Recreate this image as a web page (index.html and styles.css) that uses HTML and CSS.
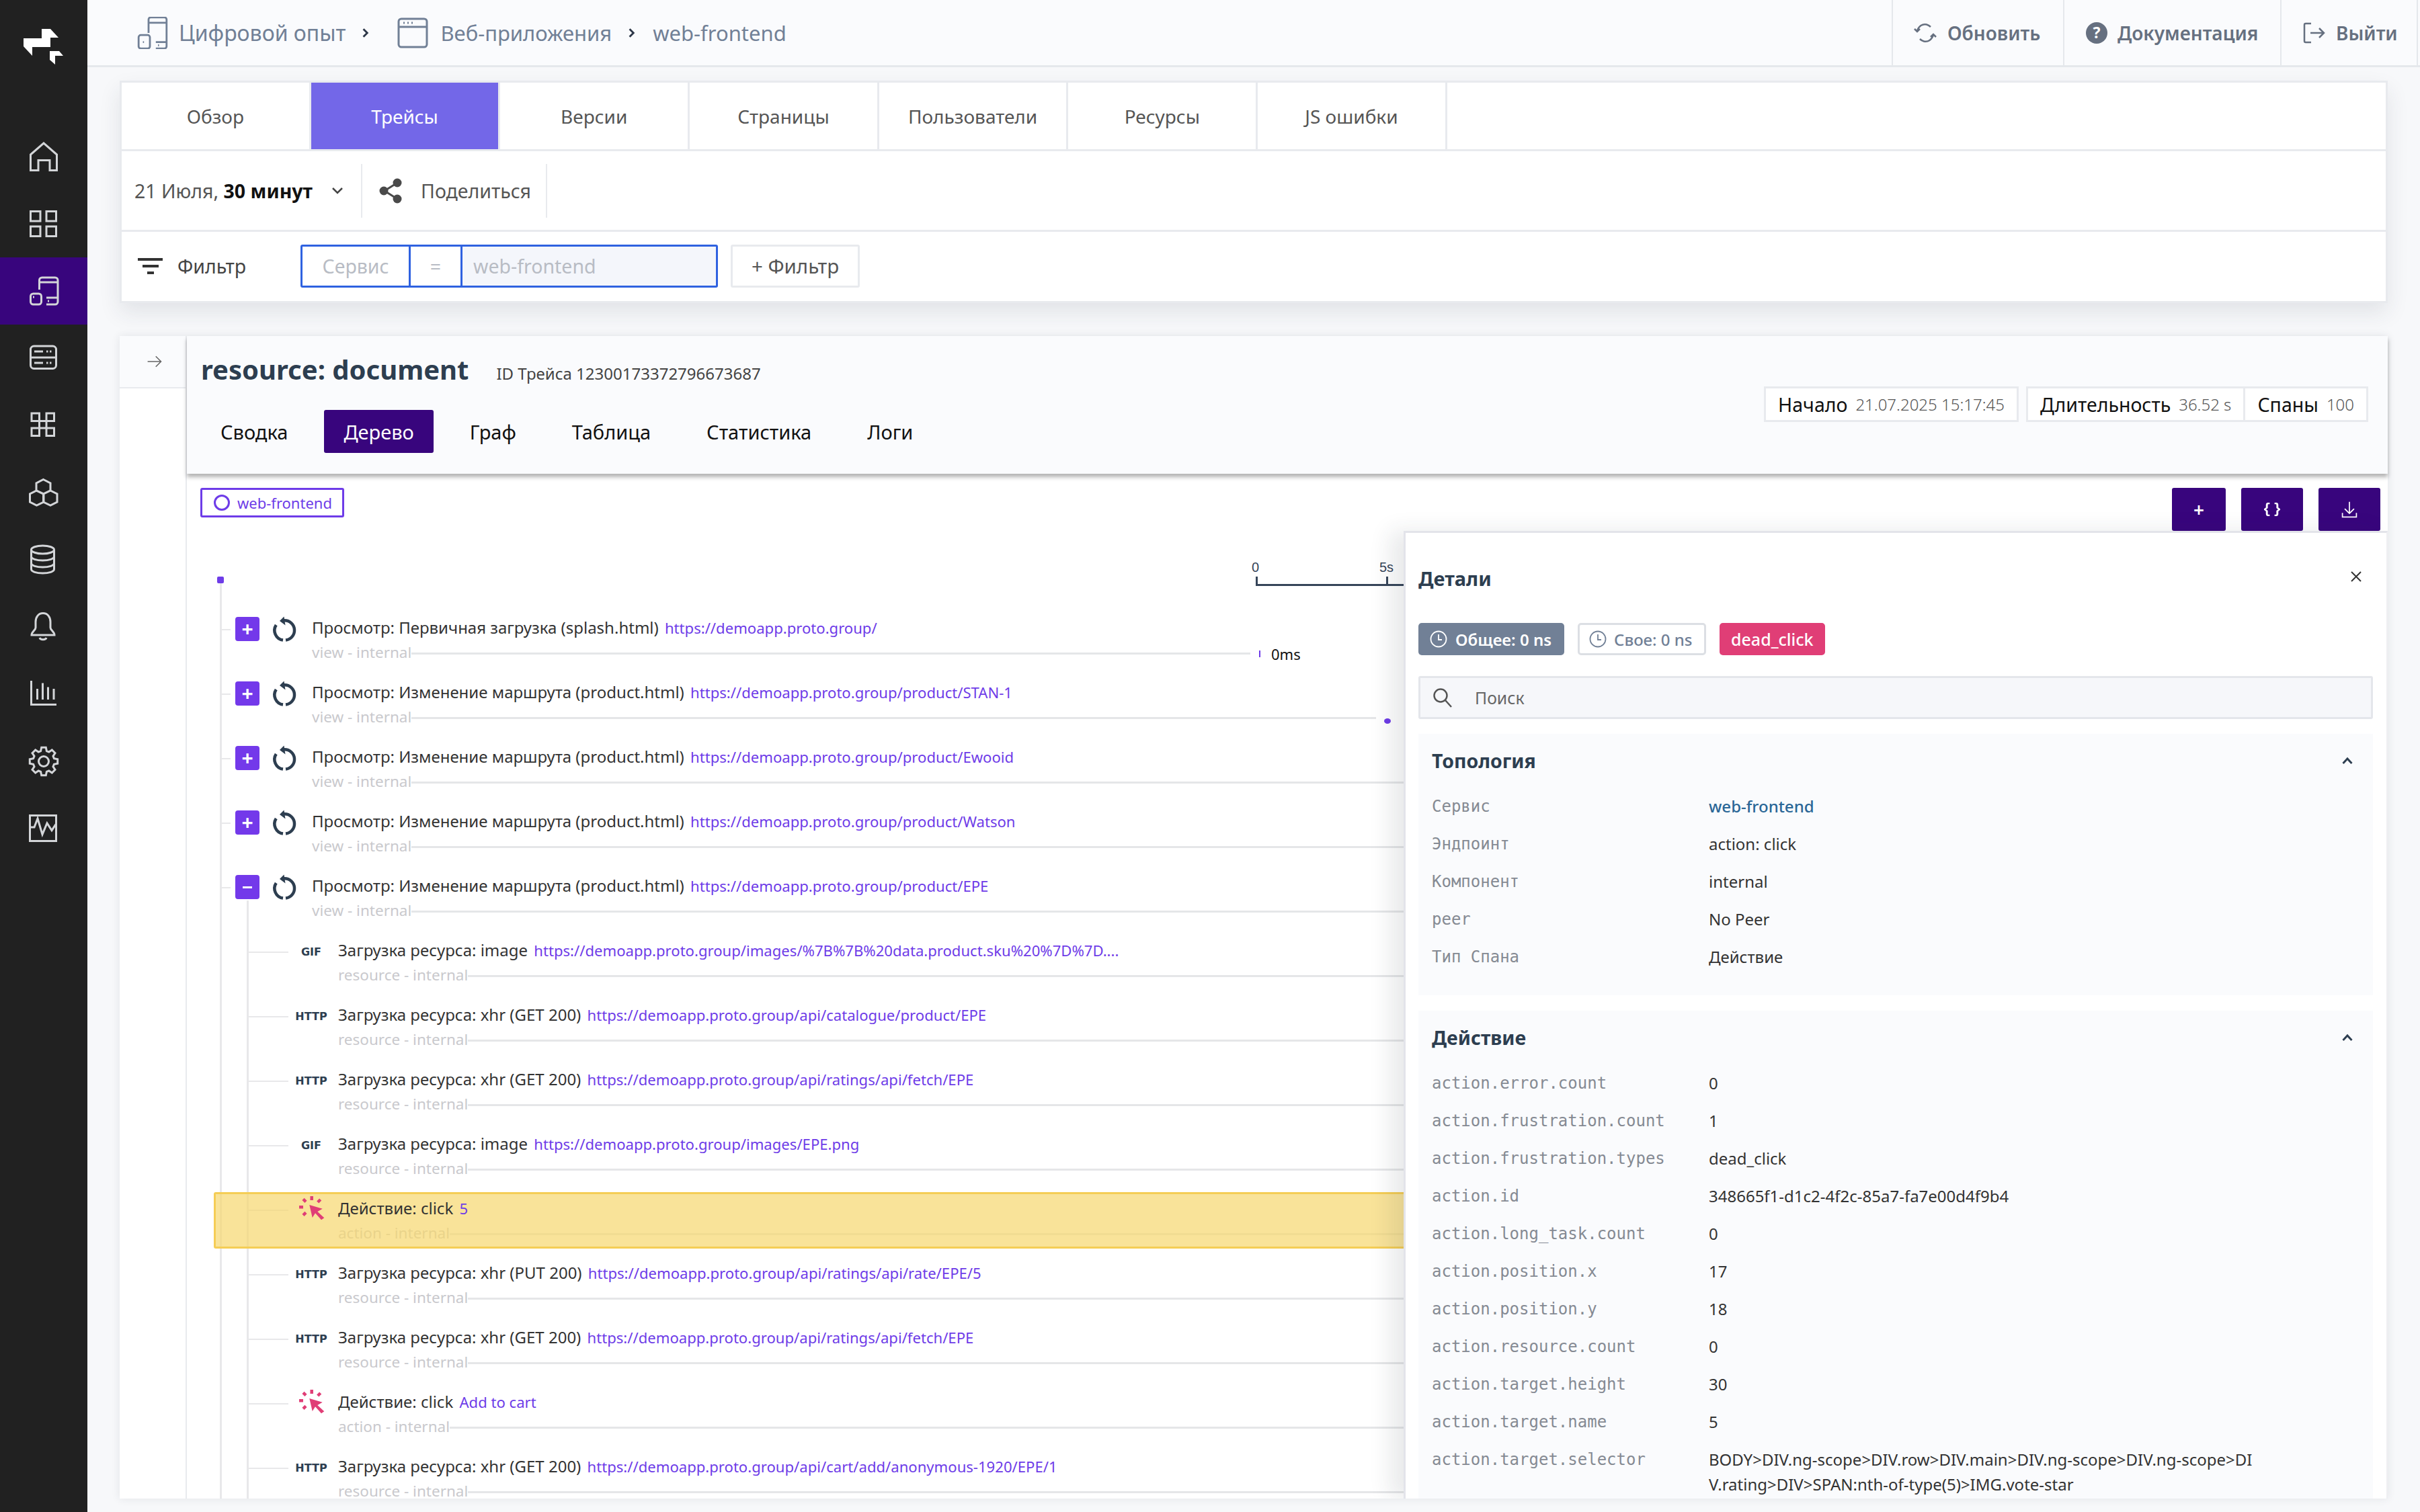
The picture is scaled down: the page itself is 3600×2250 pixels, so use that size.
FILE: index.html
```html
<!DOCTYPE html>
<html lang="ru">
<head>
  <meta charset="UTF-8">
  <meta name="viewport" content="width=device-width, initial-scale=1.0">
  <title>Трейсы</title>
  <link rel="stylesheet" href="styles.css">
</head>
<body>
  <aside class="sidebar">
    <svg class="logo" viewBox="0 0 130 183"><polygon points="35,57 62,57 62,43 75,43 87,56 75,56 75,70 48,70 48,83 35,69"/><polygon points="74,76 88,76 94,83 82,83 82,96 74,89"/></svg>
    <a class="side-item"><svg viewBox="0 0 60 60"><path d="M10.5 50.5V27L30 10l19.5 17v23.5H39V35.5H22v15z"/></svg></a>
    <a class="side-item"><svg viewBox="0 0 60 60"><rect x="10.5" y="11.5" width="14.5" height="14.5"/><rect x="34" y="11.5" width="14.5" height="14.5"/><rect x="10.5" y="34" width="14.5" height="14.5"/><rect x="34" y="34" width="14.5" height="14.5"/></svg></a>
    <a class="side-item active"><svg viewBox="0 0 60 60"><path d="M23.5 28V14a4 4 0 0 1 4-4H47a4 4 0 0 1 4 4v32a4 4 0 0 1-4 4H34M23.5 17H51M34 40h17M36 45h2M14 39h2"/><rect x="10.5" y="34" width="16" height="16" rx="4"/></svg></a>
    <a class="side-item"><svg viewBox="0 0 60 60"><rect x="10.5" y="12" width="38" height="33.5" rx="5"/><path d="M10.5 29h38M16 20h13M16 37h13M34 20h2.500M39 20h2.500M34 37h2.500M39 37h2.500"/></svg></a>
    <a class="side-item"><svg viewBox="0 0 60 60"><rect x="12" y="12" width="11.500" height="11.500"/><rect x="34" y="12" width="11.500" height="11.500"/><rect x="12" y="34" width="11.500" height="11.500"/><rect x="34" y="34" width="11.500" height="11.500"/><rect x="23.500" y="23.500" width="10.500" height="10.500"/></svg></a>
    <a class="side-item"><svg viewBox="0 0 60 60"><path d="M29.500 10.500L40 16v11l-10.500 5L19 27V16zM19.500 27L30 32v12l-10.500 5-10-5V32zM40 27l10 5v12l-10 5-10.500-5V32z"/></svg></a>
    <a class="side-item"><svg viewBox="0 0 60 60"><ellipse cx="28.500" cy="15" rx="17" ry="6"/><path d="M11.500 15v29c0 3.500 7.500 6 17 6s17-2.500 17-6V15M11.500 25c0 3.500 7.500 6 17 6s17-2.500 17-6M11.500 35c0 3.500 7.500 6 17 6s17-2.500 17-6"/></svg></a>
    <a class="side-item"><svg viewBox="0 0 60 60"><path d="M29 9.500c-7 0-11 6-11 13V31c0 4-6 6-6 11h34c0-5-6-7-6-11v-8.500c0-7-4-13-11-13zM24 46c1 3.500 9 3.500 10 0"/></svg></a>
    <a class="side-item"><svg viewBox="0 0 60 60"><path d="M11.500 10v35.500H49M20.500 22v16M28.500 13.500V38M36.500 19.500V38M45 22v16"/></svg></a>
    <a class="side-item"><svg viewBox="0 0 60 60"><g transform="translate(30 30)"><path d="M-4.400-15.400L-3.300-20.700H3.300L4.400-15.400 7.800-14 12.300-17 17-12.300 14-7.800 15.400-4.400 20.700-3.300V3.300L15.400 4.400 14 7.800 17 12.300 12.300 17 7.800 14 4.400 15.400 3.300 20.700H-3.300L-4.400 15.400-7.800 14-12.300 17-17 12.300-14 7.800-15.400 4.400-20.700 3.300V-3.300L-15.400-4.400-14-7.800-17-12.300-12.300-17-7.800-14z"/><circle r="7.500"/></g></svg></a>
    <a class="side-item"><svg viewBox="0 0 60 60"><rect x="9.500" y="10.500" width="39" height="38"/><path d="M9 28h7l5-13 7 23.700L35 22l7 10.700 6-9"/></svg></a>
  </aside>

  <div class="main">
    <header class="topbar">
      <nav class="crumbs">
        <svg class="crumb-icon" viewBox="0 0 60 60"><path d="M22.500 30V5a4 4 0 0 1 4-4H52a4 4 0 0 1 4 4v50a4 4 0 0 1-4 4H36M22.500 11H56M36 47h20M40 53h2M12 47h2"/><rect x="4" y="34" width="21" height="25" rx="4"/></svg>
        <span class="crumb-first">Цифровой опыт</span>
        <svg class="crumb-sep sep-first" viewBox="0 0 10 14"><path d="M2 2l5 5-5 5"/></svg>
        <svg class="crumb-icon crumb-window" viewBox="0 0 46 46"><rect x="2" y="2" width="42" height="42" rx="4"/><path d="M2 14h42M9 8h2M15 8h2M21 8h2"/></svg>
        <span>Веб-приложения</span>
        <svg class="crumb-sep" viewBox="0 0 10 14"><path d="M2 2l5 5-5 5"/></svg>
        <span>web-frontend</span>
      </nav>
      <div class="top-actions">
        <a class="top-btn btn-refresh"><svg viewBox="0 0 36 36"><path d="M6 15c2-7 8-11 14-9.500 2.500.6 4.500 2 6 3.500M30 21c-2 7-8 11-14 9.500-2.500-.6-4.500-2-6-3.500M2 12l4 4 4-4M26 24l4-4 4 4"/></svg>Обновить</a>
        <a class="top-btn btn-docs"><span class="help-icon">?</span>Документация</a>
        <a class="top-btn btn-exit"><svg viewBox="0 0 36 36"><path d="M14 4H6a2 2 0 0 0-2 2v24a2 2 0 0 0 2 2h8M13 18h20M26 11l7 7-7 7"/></svg>Выйти</a>
      </div>
    </header>

    <div class="content">
      <section class="card">
        <div class="tabs">
          <a class="tab">Обзор</a>
          <a class="tab active">Трейсы</a>
          <a class="tab">Версии</a>
          <a class="tab">Страницы</a>
          <a class="tab">Пользователи</a>
          <a class="tab">Ресурсы</a>
          <a class="tab">JS ошибки</a>
        </div>
        <div class="time-row">
          <div class="time-pick">
            <span>21 Июля, <b>30 минут</b></span>
            <svg viewBox="0 0 20 14"><path d="M3 3l7 7 7-7"/></svg>
          </div>
          <a class="share">
            <svg viewBox="0 0 36 38"><path class="share-lines" d="M27 7L8 19l19 12"/><circle cx="27" cy="7" r="6.500"/><circle cx="7" cy="19" r="6.500"/><circle cx="27" cy="31" r="6.500"/></svg>
            Поделиться
          </a>
        </div>
        <div class="filter-row">
          <div class="filter-title">
            <span class="filter-icon"><i></i><i></i><i></i></span>
            Фильтр
          </div>
          <div class="filter-group">
            <span class="f-key">Сервис</span>
            <span class="f-op">=</span>
            <span class="f-val">web-frontend</span>
          </div>
          <a class="add-filter">+ Фильтр</a>
        </div>
      </section>

      <section class="trace">
        <div class="trace-side">
          <a class="collapse"><svg viewBox="0 0 30 30"><path d="M3 15h23M17 6l9 9-9 9"/></svg></a>
        </div>
        <div class="trace-main">
          <div class="trace-head">
            <div>
              <div class="trace-title">
                <h1>resource: document</h1>
                <span class="trace-id">ID Трейса 12300173372796673687</span>
              </div>
              <div class="view-tabs">
                <a class="view-tab">Сводка</a>
                <a class="view-tab active">Дерево</a>
                <a class="view-tab">Граф</a>
                <a class="view-tab">Таблица</a>
                <a class="view-tab">Статистика</a>
                <a class="view-tab">Логи</a>
              </div>
            </div>
            <div class="stats">
              <div class="stat">Начало <small>21.07.2025 15:17:45</small></div>
              <div class="stat-pair">
                <div class="stat">Длительность <small>36.52 s</small></div>
                <div class="stat">Спаны <small>100</small></div>
              </div>
            </div>
          </div>

          <div class="trace-body">
            <div class="toolbar">
              <span class="service-chip"><i></i>web-frontend</span>
              <div class="tool-btns">
                <a class="tool-btn tool-plus">+</a>
                <a class="tool-btn tool-code"><svg viewBox="2 2 20 20" preserveAspectRatio="none"><path d="M9 3H7.500C6 3 5.500 4 5.500 5v4.500L3 12l2.500 2.500V19c0 1 .5 2 2 2H9M15 3h1.500c1.500 0 2 1 2 2v4.500L21 12l-2.500 2.500V19c0 1-.5 2-2 2H15"/></svg></a>
                <a class="tool-btn tool-down"><svg viewBox="0 0 30 30"><path d="M15 2v19M7 14l8 8 8-8M3 21v7h24v-7"/></svg></a>
              </div>
            </div>

            <div class="tree-head">
              <span class="root-dot"></span>
              <div class="axis">
                <span class="axis-label label-start">0</span>
                <span class="axis-label label-five">5s</span>
              </div>
            </div>

            <div class="tree">
              <div class="row">
                <span class="tick"></span><a class="toggle">+</a>
                <svg class="view-icon" viewBox="0 0 40 40"><path d="M20 7.300A14.700 14.700 0 0 1 22 36.600M18 36.600A14.700 14.700 0 0 1 7.800 14"/><polygon points="13,8 19.500,1.500 21.500,14.500"/></svg>
                <div class="row-body">
                  <div class="row-title">Просмотр: Первичная загрузка (splash.html) <a>https://demoapp.proto.group/</a></div>
                  <div class="row-sub"><span>view - internal</span><i class="rule"></i>
                    <span class="mark mark-zero"><i class="mark-bar"></i>0ms</span></div>
                </div>
              </div>
              <div class="row">
                <span class="tick"></span><a class="toggle">+</a>
                <svg class="view-icon" viewBox="0 0 40 40"><path d="M20 7.300A14.700 14.700 0 0 1 22 36.600M18 36.600A14.700 14.700 0 0 1 7.800 14"/><polygon points="13,8 19.500,1.500 21.500,14.500"/></svg>
                <div class="row-body">
                  <div class="row-title">Просмотр: Изменение маршрута (product.html) <a>https://demoapp.proto.group/product/STAN-1</a></div>
                  <div class="row-sub"><span>view - internal</span><i class="rule"></i>
                    <span class="mark mark-dot"><i class="mark-point"></i></span></div>
                </div>
              </div>
              <div class="row">
                <span class="tick"></span><a class="toggle">+</a>
                <svg class="view-icon" viewBox="0 0 40 40"><path d="M20 7.300A14.700 14.700 0 0 1 22 36.600M18 36.600A14.700 14.700 0 0 1 7.800 14"/><polygon points="13,8 19.500,1.500 21.500,14.500"/></svg>
                <div class="row-body">
                  <div class="row-title">Просмотр: Изменение маршрута (product.html) <a>https://demoapp.proto.group/product/Ewooid</a></div>
                  <div class="row-sub"><span>view - internal</span><i class="rule"></i></div>
                </div>
              </div>
              <div class="row">
                <span class="tick"></span><a class="toggle">+</a>
                <svg class="view-icon" viewBox="0 0 40 40"><path d="M20 7.300A14.700 14.700 0 0 1 22 36.600M18 36.600A14.700 14.700 0 0 1 7.800 14"/><polygon points="13,8 19.500,1.500 21.500,14.500"/></svg>
                <div class="row-body">
                  <div class="row-title">Просмотр: Изменение маршрута (product.html) <a>https://demoapp.proto.group/product/Watson</a></div>
                  <div class="row-sub"><span>view - internal</span><i class="rule"></i></div>
                </div>
              </div>
              <div class="row">
                <span class="tick"></span><a class="toggle toggle-minus"></a>
                <svg class="view-icon" viewBox="0 0 40 40"><path d="M20 7.300A14.700 14.700 0 0 1 22 36.600M18 36.600A14.700 14.700 0 0 1 7.800 14"/><polygon points="13,8 19.500,1.500 21.500,14.500"/></svg>
                <div class="row-body">
                  <div class="row-title">Просмотр: Изменение маршрута (product.html) <a>https://demoapp.proto.group/product/EPE</a></div>
                  <div class="row-sub"><span>view - internal</span><i class="rule"></i></div>
                </div>
              </div>

              <div class="children">
                <div class="row child">
                  <span class="tick"></span><span class="kind">GIF</span>
                  <div class="row-body">
                    <div class="row-title">Загрузка ресурса: image <a>https://demoapp.proto.group/images/%7B%7B%20data.product.sku%20%7D%7D....</a></div>
                    <div class="row-sub"><span>resource - internal</span><i class="rule"></i></div>
                  </div>
                </div>
                <div class="row child">
                  <span class="tick"></span><span class="kind">HTTP</span>
                  <div class="row-body">
                    <div class="row-title">Загрузка ресурса: xhr (GET 200) <a>https://demoapp.proto.group/api/catalogue/product/EPE</a></div>
                    <div class="row-sub"><span>resource - internal</span><i class="rule"></i></div>
                  </div>
                </div>
                <div class="row child">
                  <span class="tick"></span><span class="kind">HTTP</span>
                  <div class="row-body">
                    <div class="row-title">Загрузка ресурса: xhr (GET 200) <a>https://demoapp.proto.group/api/ratings/api/fetch/EPE</a></div>
                    <div class="row-sub"><span>resource - internal</span><i class="rule"></i></div>
                  </div>
                </div>
                <div class="row child">
                  <span class="tick"></span><span class="kind">GIF</span>
                  <div class="row-body">
                    <div class="row-title">Загрузка ресурса: image <a>https://demoapp.proto.group/images/EPE.png</a></div>
                    <div class="row-sub"><span>resource - internal</span><i class="rule"></i></div>
                  </div>
                </div>
                <div class="row child selected">
                  <span class="tick"></span>
                  <span class="kind"><svg class="click-icon" viewBox="0 0 40 40"><polygon points="17.300,13 36.700,18.700 29.300,23 39.300,32.300 35,35.300 26,25.300 21.700,32"/><path d="M20.700 0v6M2 16.300h6M8 4.300l4 4M33.700 5l-4 4M8 28.300l4-4"/></svg></span>
                  <div class="row-body">
                    <div class="row-title">Действие: click <a>5</a></div>
                    <div class="row-sub"><span>action - internal</span><i class="rule"></i></div>
                  </div>
                </div>
                <div class="row child">
                  <span class="tick"></span><span class="kind">HTTP</span>
                  <div class="row-body">
                    <div class="row-title">Загрузка ресурса: xhr (PUT 200) <a>https://demoapp.proto.group/api/ratings/api/rate/EPE/5</a></div>
                    <div class="row-sub"><span>resource - internal</span><i class="rule"></i></div>
                  </div>
                </div>
                <div class="row child">
                  <span class="tick"></span><span class="kind">HTTP</span>
                  <div class="row-body">
                    <div class="row-title">Загрузка ресурса: xhr (GET 200) <a>https://demoapp.proto.group/api/ratings/api/fetch/EPE</a></div>
                    <div class="row-sub"><span>resource - internal</span><i class="rule"></i></div>
                  </div>
                </div>
                <div class="row child">
                  <span class="tick"></span>
                  <span class="kind"><svg class="click-icon" viewBox="0 0 40 40"><polygon points="17.300,13 36.700,18.700 29.300,23 39.300,32.300 35,35.300 26,25.300 21.700,32"/><path d="M20.700 0v6M2 16.300h6M8 4.300l4 4M33.700 5l-4 4M8 28.300l4-4"/></svg></span>
                  <div class="row-body">
                    <div class="row-title">Действие: click <a>Add to cart</a></div>
                    <div class="row-sub"><span>action - internal</span><i class="rule"></i></div>
                  </div>
                </div>
                <div class="row child">
                  <span class="tick"></span><span class="kind">HTTP</span>
                  <div class="row-body">
                    <div class="row-title">Загрузка ресурса: xhr (GET 200) <a>https://demoapp.proto.group/api/cart/add/anonymous-1920/EPE/1</a></div>
                    <div class="row-sub"><span>resource - internal</span><i class="rule"></i></div>
                  </div>
                </div>
              </div>
            </div>

            <aside class="details">
              <div class="details-head">
                <h2>Детали</h2>
                <svg class="close" viewBox="0 0 20 20"><path d="M3 3l14 14M17 3L3 17"/></svg>
              </div>
              <div class="chips">
                <span class="chip chip-total"><svg viewBox="0 0 26 26"><circle cx="13" cy="13" r="11.500"/><path d="M13 6v8h5"/></svg>Общее: 0 ns</span>
                <span class="chip chip-self"><svg viewBox="0 0 26 26"><circle cx="13" cy="13" r="11.500"/><path d="M13 6v8h5"/></svg>Свое: 0 ns</span>
                <span class="chip chip-tag">dead_click</span>
              </div>
              <div class="search">
                <svg viewBox="0 0 30 30"><circle cx="12" cy="12" r="9.500"/><path d="M19 19l9 10"/></svg>
                Поиск
              </div>

              <div class="section">
                <div class="section-head">
                  <h3>Топология</h3>
                  <svg viewBox="0 0 18 12"><path d="M2.500 10L9 3l6.500 7"/></svg>
                </div>
                <dl class="props">
                  <dt>Сервис</dt><dd><a>web-frontend</a></dd>
                  <dt>Эндпоинт</dt><dd>action: click</dd>
                  <dt>Компонент</dt><dd>internal</dd>
                  <dt>peer</dt><dd>No Peer</dd>
                  <dt>Тип Спана</dt><dd>Действие</dd>
                </dl>
              </div>

              <div class="section">
                <div class="section-head">
                  <h3>Действие</h3>
                  <svg viewBox="0 0 18 12"><path d="M2.500 10L9 3l6.500 7"/></svg>
                </div>
                <dl class="props">
                  <dt>action.error.count</dt><dd>0</dd>
                  <dt>action.frustration.count</dt><dd>1</dd>
                  <dt>action.frustration.types</dt><dd>dead_click</dd>
                  <dt>action.id</dt><dd>348665f1-d1c2-4f2c-85a7-fa7e00d4f9b4</dd>
                  <dt>action.long_task.count</dt><dd>0</dd>
                  <dt>action.position.x</dt><dd>17</dd>
                  <dt>action.position.y</dt><dd>18</dd>
                  <dt>action.resource.count</dt><dd>0</dd>
                  <dt>action.target.height</dt><dd>30</dd>
                  <dt>action.target.name</dt><dd>5</dd>
                  <dt>action.target.selector</dt><dd class="long">BODY&gt;DIV.ng-scope&gt;DIV.row&gt;DIV.main&gt;DIV.ng-scope&gt;DIV.ng-scope&gt;DIV.rating&gt;DIV&gt;SPAN:nth-of-type(5)&gt;IMG.vote-star</dd>
                </dl>
              </div>
            </aside>
          </div>
        </div>
      </section>
    </div>
  </div>
</body>
</html>
```

FILE: styles.css
```css
* {
  box-sizing: border-box;
}

body {
  margin: 0;
  width: 3600px;
  height: 2250px;
  display: flex;
  overflow: hidden;
  background: #f7f8fa;
  color: #333;
  font-family: 'Noto Sans', 'Noto Sans CJK SC', sans-serif;
  font-size: 25px;
}

h1, h2, h3, dl, dd {
  margin: 0;
}

i {
  font-style: normal;
}

/* sidebar */
.sidebar {
  width: 130px;
  flex: none;
  background: #212121;
}

.logo {
  display: block;
  width: 130px;
  height: 183px;
  fill: #fff;
}

.side-item {
  display: flex;
  align-items: center;
  justify-content: center;
  height: 100px;
}

.side-item.active {
  background: #38057d;
}

.side-item svg {
  width: 60px;
  height: 60px;
  fill: none;
  stroke: #d3d5d8;
  stroke-width: 3;
}

/* top bar */
.main {
  flex: 1;
  min-width: 0;
  display: flex;
  flex-direction: column;
}

.topbar {
  height: 100px;
  flex: none;
  display: flex;
  justify-content: space-between;
  background: #fafbfd;
  border-bottom: 3px solid #e5e8ec;
}

.crumbs {
  display: flex;
  align-items: center;
  padding-left: 73px;
  color: #718096;
  font-size: 31px;
}

.crumb-first {
  font-size: 32px;
}

.crumb-icon {
  width: 48px;
  height: 48px;
  margin-right: 15px;
  fill: none;
  stroke: #718096;
  stroke-width: 3.500;
}

.crumb-window {
  width: 46px;
  height: 46px;
  margin-right: 18px;
  stroke-width: 3;
}

.crumb-sep {
  width: 12px;
  height: 16px;
  margin: 0 25px 0 24px;
  fill: none;
  stroke: #2d3748;
  stroke-width: 2.500;
}

.sep-first {
  margin-right: 41px;
}

.top-actions {
  display: flex;
  margin-right: 3px;
}

.top-btn {
  display: flex;
  align-items: center;
  gap: 15px;
  border-left: 2px solid #e5e8ec;
  color: #667080;
  font-size: 28px;
  font-weight: 600;
}

.top-btn svg {
  width: 36px;
  height: 36px;
  fill: none;
  stroke: #667080;
  stroke-width: 2.500;
}

.btn-refresh {
  width: 255px;
  padding-left: 30px;
}

.btn-docs {
  width: 323px;
  padding-left: 32px;
}

.help-icon {
  width: 32px;
  height: 32px;
  display: flex;
  align-items: center;
  justify-content: center;
  background: #667080;
  border-radius: 50%;
  color: #fff;
  font-size: 23px;
  font-weight: 700;
  line-height: 1;
}

.btn-exit {
  width: 205px;
  padding-left: 30px;
  border-right: 2px solid #e5e8ec;
}

/* filter card */
.content {
  flex: 1;
  min-height: 0;
  display: flex;
  flex-direction: column;
  padding: 20px 48px 20px;
}

.card {
  height: 331px;
  flex: none;
  background: #fff;
  border: 3px solid #e8eaee;
  box-shadow: 0 14px 30px rgba(40, 50, 70, 0.1);
}

.tabs {
  display: flex;
  height: 102px;
  border-bottom: 3px solid #e8eaee;
}

.tab {
  width: 281.700px;
  display: flex;
  align-items: center;
  justify-content: center;
  border-right: 3px solid #e8eaee;
  color: #555;
  font-size: 28px;
}

.tab.active {
  background: #7367e8;
  color: #fff;
}

.time-row {
  display: flex;
  align-items: center;
  height: 120px;
  border-bottom: 3px solid #e8eaee;
}

.time-pick {
  width: 358px;
  height: 80px;
  display: flex;
  align-items: center;
  justify-content: space-between;
  padding: 0 25px 0 19px;
  border-right: 2px solid #e8eaee;
  font-size: 28.500px;
  color: #555;
}

.time-pick b {
  color: #111;
}

.time-pick svg {
  width: 20px;
  height: 14px;
  fill: none;
  stroke: #444;
  stroke-width: 2.500;
}

.share {
  width: 275px;
  height: 80px;
  display: flex;
  align-items: center;
  gap: 26px;
  padding-left: 25px;
  border-right: 2px solid #e8eaee;
  color: #555;
  font-size: 28.500px;
}

.share svg {
  width: 36px;
  height: 38px;
  fill: #4a4a4a;
}

.share-lines {
  fill: none;
  stroke: #4a4a4a;
  stroke-width: 3;
}

.filter-row {
  display: flex;
  align-items: center;
  height: 103px;
  padding-bottom: 2px;
}

.filter-title {
  width: 266px;
  display: flex;
  align-items: center;
  gap: 22px;
  padding-left: 24px;
  font-size: 28.500px;
  color: #444;
}

.filter-icon {
  width: 37px;
  display: flex;
  flex-direction: column;
  align-items: center;
  gap: 6px;
}

.filter-icon i {
  display: block;
  width: 37px;
  height: 4px;
  background: #333;
}

.filter-icon i:nth-child(2) {
  width: 24px;
}

.filter-icon i:nth-child(3) {
  width: 10px;
}

.filter-group {
  width: 621px;
  height: 64px;
  display: flex;
  border: 3px solid #2f62e0;
  border-radius: 3px;
  color: #b8bcc4;
  font-size: 28.500px;
}

.f-key, .f-op, .f-val {
  display: flex;
  align-items: center;
}

.f-key {
  width: 161px;
  justify-content: center;
  border-right: 3px solid #2f62e0;
}

.f-op {
  width: 77px;
  justify-content: center;
  border-right: 3px solid #2f62e0;
}

.f-val {
  flex: 1;
  padding-left: 16px;
  background: #f4f6fb;
}

.add-filter {
  width: 192px;
  height: 64px;
  display: flex;
  align-items: center;
  justify-content: center;
  margin-left: 19px;
  border: 3px solid #e8eaee;
  border-radius: 3px;
  color: #555;
  font-size: 29.500px;
}

/* trace panel */
.trace {
  flex: 1;
  min-height: 0;
  display: flex;
  margin-top: 49px;
  background: #fff;
  box-shadow: 0 0 12px rgba(40, 50, 70, 0.1);
}

.trace-side {
  width: 100px;
  flex: none;
  border-right: 2px solid #e8eaee;
}

.collapse {
  display: flex;
  align-items: center;
  justify-content: center;
  height: 78px;
  padding-left: 5px;
  background: #fafbfd;
  border-bottom: 2px solid #e8eaee;
}

.collapse svg {
  width: 26px;
  height: 26px;
  fill: none;
  stroke: #666;
  stroke-width: 1.800;
}

.trace-main {
  flex: 1;
  min-width: 0;
  display: flex;
  flex-direction: column;
}

.trace-head {
  position: relative;
  z-index: 3;
  height: 205px;
  flex: none;
  display: flex;
  justify-content: space-between;
  padding: 24px 29px 0 21px;
  background: #fafbfd;
  box-shadow: 0 5px 6px rgba(0, 0, 0, 0.3);
}

.trace-title {
  display: flex;
  align-items: baseline;
  gap: 41px;
  height: 52px;
}

h1 {
  color: #2d3e50;
  font-size: 40px;
  font-weight: 700;
  line-height: 52px;
}

.trace-id {
  font-size: 24px;
  color: #444;
}

.view-tabs {
  display: flex;
  gap: 25px;
  margin-top: 34px;
}

.view-tab {
  height: 64px;
  display: flex;
  align-items: center;
  padding: 0 29px;
  border-radius: 3px;
  color: #111;
  font-size: 29px;
}

.view-tab.active {
  background: #38057d;
  color: #fff;
}

.stats {
  display: flex;
  align-items: flex-start;
  gap: 11px;
  margin-top: 51px;
}

.stat-pair {
  display: flex;
}

.stat {
  height: 53px;
  display: flex;
  align-items: center;
  gap: 12px;
  padding: 0 18px;
  background: #fff;
  border: 3px solid #e8eaee;
  color: #111;
  font-size: 28.500px;
}

.stat-pair .stat + .stat {
  border-left: 0;
}

.stat small {
  color: #555;
  font-size: 24px;
  font-weight: 300;
}

/* tree */
.trace-body {
  position: relative;
  flex: 1;
  min-height: 0;
  overflow: hidden;
}

.toolbar {
  display: flex;
  justify-content: space-between;
  padding: 21px 11px 0 20px;
}

.service-chip {
  height: 44px;
  display: flex;
  align-items: center;
  gap: 11px;
  padding: 0 15px 0 17px;
  border: 3px solid #6e3ce8;
  border-radius: 3px;
  color: #6e3ce8;
  font-size: 22px;
}

.service-chip i {
  width: 24px;
  height: 24px;
  border: 3px solid #6e3ce8;
  border-radius: 50%;
}

.tool-btns {
  display: flex;
  gap: 23px;
}

.tool-btn {
  width: 80px;
  height: 64px;
  display: flex;
  align-items: center;
  justify-content: center;
  background: #38057d;
  border-radius: 3px;
  color: #fff;
  font-size: 28px;
  font-weight: 600;
}

.tool-code, .tool-down {
  width: 92px;
}

.tool-btn svg {
  width: 26px;
  height: 26px;
  fill: none;
  stroke: #fff;
  stroke-width: 2;
}

.tool-btn.tool-code svg {
  width: 24px;
  height: 20px;
  stroke-width: 2.400;
}

.tree-head {
  display: flex;
  height: 78px;
}

.root-dot {
  width: 10px;
  height: 10px;
  margin: 68px 0 0 45px;
  background: #6e3ce8;
  border-radius: 2px;
}

.axis {
  position: relative;
  width: 300px;
  height: 14px;
  margin: 68px 0 0 1535px;
  border-bottom: 3px solid #364559;
  border-left: 3px solid #364559;
}

.axis::after {
  content: "";
  position: absolute;
  left: 191px;
  top: 0;
  width: 3px;
  height: 14px;
  background: #364559;
}

.axis-label {
  position: absolute;
  top: -25px;
  color: #364559;
  font-family: 'Liberation Sans', sans-serif;
  font-size: 20px;
}

.label-start {
  left: -9px;
}

.label-five {
  left: 181px;
}

.tree {
  margin-left: 49px;
  padding-top: 32px;
  border-left: 3px solid #e8e8ea;
  height: 1400px;
}

.row {
  position: relative;
  display: flex;
  height: 96px;
}

.tick {
  flex: none;
  width: 13px;
  height: 2px;
  margin: 36px 7px 0 0;
  background: #e8e8ea;
}

.toggle {
  flex: none;
  width: 36px;
  height: 36px;
  margin-top: 18px;
  display: flex;
  align-items: center;
  justify-content: center;
  background: #7339ea;
  border-radius: 4px;
  color: #fff;
  font-size: 30px;
  font-weight: 700;
  line-height: 1;
}

.toggle-minus::after {
  content: "";
  width: 14px;
  height: 3px;
  background: #fff;
}

.view-icon {
  flex: none;
  width: 40px;
  height: 40px;
  margin: 16px 0 0 17px;
  fill: #2d3e50;
  stroke: none;
}

.view-icon path {
  fill: none;
  stroke: #2d3e50;
  stroke-width: 4.500;
}

.row-body {
  flex: 1;
  min-width: 0;
  margin: 16px 0 0 21px;
}

.row-title {
  height: 36px;
  line-height: 36px;
  font-size: 24px;
  white-space: nowrap;
  color: #333;
}

.row-title a {
  margin-left: 3px;
  color: #6e3ce8;
  font-size: 22.100px;
}

.row-sub {
  display: flex;
  align-items: center;
  height: 36px;
  color: #c9c9cd;
  font-size: 22.500px;
}

.rule {
  flex: 1;
  height: 3px;
  margin-top: 5px;
  background: #e5e6e8;
}

.mark {
  flex: none;
  display: flex;
  align-items: center;
  color: #111;
  font-size: 22px;
  margin-top: 5px;
}

.mark-zero {
  width: 1692px;
  padding-left: 13px;
}

.mark-bar {
  width: 2px;
  height: 10px;
  margin-right: 16px;
  background: #6e3ce8;
}

.mark-dot {
  width: 1505px;
  padding-left: 12px;
}

.mark-point {
  width: 10px;
  height: 8px;
  margin-top: 8px;
  background: #6e3ce8;
  border-radius: 50%;
}

.children {
  position: relative;
  margin-left: 37px;
}

.children::before {
  content: "";
  position: absolute;
  left: 0;
  top: -40px;
  bottom: 0;
  width: 3px;
  background: #e8e8ea;
}

.child .tick {
  width: 59px;
  margin: 36px 0 0 3px;
}

.kind {
  flex: none;
  width: 68px;
  height: 72px;
  display: flex;
  align-items: center;
  justify-content: center;
  color: #2d3e50;
  font-family: 'DejaVu Sans', sans-serif;
  font-size: 16px;
  font-weight: 700;
}

.child .row-body {
  margin-left: 6px;
}

.click-icon {
  width: 40px;
  height: 40px;
  fill: #e03e76;
  stroke: #e03e76;
  stroke-width: 0;
}

.click-icon path {
  fill: none;
  stroke-width: 4.500;
}

/* selected row sits over the guide lines */
.selected::after {
  content: "";
  box-sizing: border-box;
  position: absolute;
  left: -49px;
  right: 0;
  top: 10px;
  height: 84px;
  background: rgba(247, 215, 110, 0.7);
  border: 3px solid #f5cd55;
  border-radius: 3px;
}

.selected .row-title,
.selected .kind {
  position: relative;
  z-index: 1;
}

/* details panel */
.details {
  position: absolute;
  top: 85px;
  right: 0;
  bottom: 0;
  z-index: 2;
  width: 1464px;
  padding: 0 20px 0 19px;
  background: #fff;
  border-top: 3px solid #e3e4ea;
  border-left: 3px solid #e3e4ea;
  border-right: 2px solid #eeeff2;
  box-shadow: -20px 0 30px rgba(40, 45, 60, 0.1);
}

.details-head {
  display: flex;
  align-items: center;
  justify-content: space-between;
  height: 134px;
  padding-right: 15px;
}

h2 {
  color: #2d3e50;
  font-size: 29px;
  font-weight: 700;
}

.close {
  width: 20px;
  height: 20px;
  margin-bottom: 4px;
  fill: none;
  stroke: #333;
  stroke-width: 2;
}

.chips {
  display: flex;
  gap: 20px;
}

.chip {
  height: 48px;
  display: flex;
  align-items: center;
  gap: 12px;
  padding: 0 17px;
  border-radius: 5px;
  font-size: 24px;
  font-weight: 600;
  white-space: nowrap;
}

.chip svg {
  flex: none;
  width: 26px;
  height: 26px;
  fill: none;
  stroke-width: 1.800;
}

.chip-total {
  width: 217px;
  background: #718096;
  color: #fff;
}

.chip-total svg {
  stroke: #fff;
}

.chip-self {
  width: 191px;
  padding: 0 14px;
  gap: 11px;
  border: 3px solid #dcdfe4;
  color: #718096;
  font-weight: 500;
}

.chip-self svg {
  stroke: #718096;
}

.chip-tag {
  background: #e03e76;
  color: #fff;
  font-size: 25px;
  font-weight: 500;
}

.search {
  height: 64px;
  display: flex;
  align-items: center;
  gap: 33px;
  margin-top: 31px;
  padding-left: 18px;
  background: #f6f7fa;
  border: 3px solid #e4e6eb;
  border-radius: 3px;
  color: #666;
  font-size: 24.750px;
}

.search svg {
  width: 30px;
  height: 30px;
  fill: none;
  stroke: #555;
  stroke-width: 2.500;
}

.section {
  margin-top: 22px;
  padding: 0 20px 29px;
  background: #fafbfd;
}

.section + .section {
  margin-top: 23px;
}

.section-head {
  display: flex;
  align-items: center;
  justify-content: space-between;
  height: 80px;
  padding-right: 9px;
}

.section-head svg {
  width: 18px;
  height: 12px;
  fill: none;
  stroke: #2d3e50;
  stroke-width: 3;
}

h3 {
  color: #2d3e50;
  font-size: 28.500px;
  font-weight: 700;
}

.props {
  display: grid;
  grid-template-columns: 412px 812px;
  line-height: 56px;
  font-size: 24px;
}

.props dt {
  color: #858a93;
  font-family: 'DejaVu Sans Mono', monospace;
}

.props dd {
  color: #333;
}

.props dd a {
  color: #2b6797;
  font-weight: 500;
}

.props .long {
  padding-top: 9px;
  line-height: 37px;
  word-break: break-all;
}
```
